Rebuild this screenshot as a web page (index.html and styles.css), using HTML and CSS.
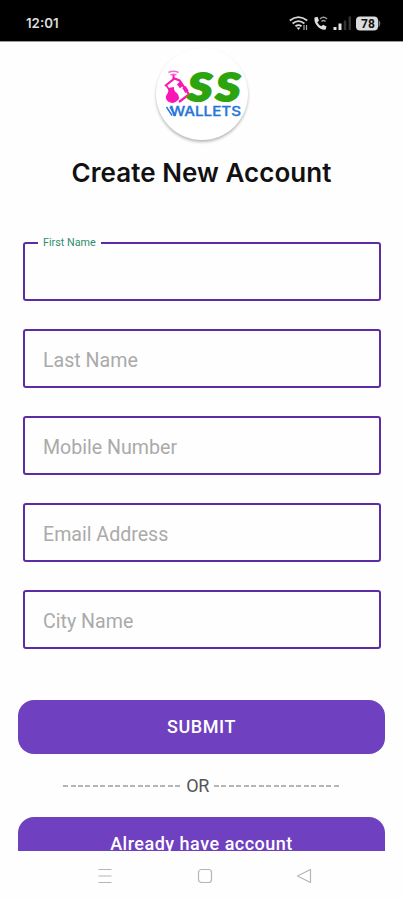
FILE: index.html
```html
<!DOCTYPE html>
<html lang="en">
<head>
<meta charset="utf-8">
<title>Create New Account</title>
<link rel="stylesheet" href="styles.css">
</head>
<body>
<header class="status">
  <span class="time">12:01</span>
  <svg class="indicators" width="96" height="20" viewBox="0 0 96 20">
    <g fill="none" stroke="#d8d8d8" stroke-width="1.8">
      <path d="M.8 7.500Q9.500.8 18.200 7.500M3.600 10.500Q9.500 5.800 15.400 10.500M6.500 13.300Q9.500 11 12.500 13.300"/>
    </g>
    <path d="M7.500 14.500h4l-2 2.500z" fill="#d8d8d8"/>
    <path d="M15 12v5M17.500 12v5" stroke="#aaa" stroke-width="1.200"/>
    <path d="M25.500 4.500l3-.8 1.500 4-1.700 1.500q1.300 2.700 4 4l1.800-1.500 3.400 1.800-.8 3q-4.700.8-8.200-3.200Q24.800 9.500 25.500 4.500z" fill="#e0e0e0"/>
    <path d="M31 6q3.500-3.500 7 0M32.500 8.500q2-2 4 0" fill="none" stroke="#999" stroke-width="1.500"/>
    <path d="M46 14v3M51 10.500V17" stroke="#e4e4e4" stroke-width="3"/>
    <path d="M56 7.500V17M60.800 3.500V17" stroke="#343434" stroke-width="2.500"/>
    <rect x="67" y="3.500" width="22" height="14" rx="4" fill="#dcdcdc"/>
    <path d="M89.500 6.500q3.500 4 0 8z" fill="#777"/>
    <text class="battery" x="79" y="15" text-anchor="middle">78</text>
  </svg>
</header>
<main class="page">
  <div class="logo">
    <svg width="92" height="92" viewBox="0 0 92 92">
      <g fill="none" stroke="#fa16b5">
        <path d="M12.500 24.500q5-2.500 10 0M14.500 27q3-1.500 6 0" stroke-width="1.400" stroke="#f36bd0"/>
        <path d="M17.500 27v4" stroke-width="2"/>
        <path d="M9 38l9.500-7.500 5 2 9.500 14-10 7.500" stroke-width="2.200"/>
        <path d="M10 37l4 6" stroke-width="1.500"/>
        <path d="M22.500 35l3 4M28 39l3 5" stroke-width="4"/>
      </g>
      <path d="M12 40l6-1q-.5 4 3 6 4 5 0 8-4 3.500-9 .5-4-4-.5-8 1.500-2 .5-5.500z" fill="#fa16b5"/>
      <text class="ss" x="32" y="52.500" textLength="24" lengthAdjust="spacingAndGlyphs">S</text>
      <text class="ss" x="60" y="52.500" textLength="24" lengthAdjust="spacingAndGlyphs">S</text>
      <path d="M10.500 59l5.500 8.500M14 59l5.500 8.500" stroke="#2676d9" stroke-width="1.400"/>
      <text class="wallets" x="14" y="68" textLength="71" lengthAdjust="spacingAndGlyphs">WALLETS</text>
    </svg>
  </div>
  <h1 class="title">Create New Account</h1>
  <form class="form">
    <div class="field"><span class="floating">First Name</span></div>
    <div class="field">Last Name</div>
    <div class="field">Mobile Number</div>
    <div class="field">Email Address</div>
    <div class="field">City Name</div>
  </form>
  <div class="button submit">SUBMIT</div>
  <div class="divider"><i class="dashes left"></i><span class="or">OR</span><i class="dashes right"></i></div>
  <div class="button account">Already have account</div>
</main>
<nav class="nav">
  <svg width="16" height="16" viewBox="0 0 16 16"><path d="M1.500 1.500h13M1.500 8h13M1.500 14.500h13"/></svg>
  <svg width="16" height="16" viewBox="0 0 16 16"><rect x="1.500" y="1.500" width="13" height="13" rx="3"/></svg>
  <svg width="16" height="16" viewBox="0 0 16 16"><path d="M14.500 1.500v13L1.500 8z" stroke-linejoin="round"/></svg>
</nav>
</body>
</html>
```
FILE: styles.css
```css
* { box-sizing: border-box; }
body {
  margin: 0;
  width: 403px;
  height: 900px;
  overflow: hidden;
  display: flex;
  flex-direction: column;
  background: #fefefe;
  font-family: Roboto, "Liberation Sans", sans-serif;
}
.status {
  height: 42px;
  flex: none;
  display: flex;
  justify-content: space-between;
  align-items: flex-start;
  padding: 13px 18px 0 26px;
  background: #000;
  border-bottom: 1px solid #999;
}
.time {
  color: #ddd;
  font: 600 13.300px/21px Inter, sans-serif;
}
.battery { font: 700 12px Roboto, sans-serif; fill: #111; }
.page {
  height: 809px;
  flex: none;
  overflow: hidden;
  padding: 6px 18px 0;
}
.logo {
  width: 92px;
  height: 92px;
  margin: 0 auto;
  border-radius: 50%;
  background: #fff;
  box-shadow: 0 2px 3px rgba(0, 0, 0, .28);
}
.logo svg { display: block; }
.ss { font: italic 900 37px Lato, sans-serif; fill: #2ca40e; stroke: #2ca40e; stroke-width: 2.2px; }
.wallets { font: 500 12.500px Inter, sans-serif; fill: #2676d9; stroke: #2676d9; stroke-width: .3px; }
.title {
  margin: 15px 0 0;
  text-align: center;
  font: 600 26px/36px Inter, sans-serif;
  letter-spacing: .05px;
  color: #111;
}
.form {
  display: flex;
  flex-direction: column;
  gap: 28px;
  margin: 51px 4px 0 5px;
}
.field {
  position: relative;
  height: 59px;
  border: 2px solid #5d2ca5;
  border-radius: 3px;
  padding: 2px 18px 0;
  font-size: 19.600px;
  line-height: 55px;
  color: #aaa;
}
.floating {
  position: absolute;
  left: 13px;
  top: -8px;
  padding: 0 5px;
  background: #fefefe;
  color: #2f8c6c;
  font-size: 10.800px;
  line-height: 14px;
}
.button {
  height: 54px;
  border-radius: 16px;
  background: #6f40bf;
  color: #fff;
  text-align: center;
  font-size: 18px;
  font-weight: 500;
  line-height: 53px;
  letter-spacing: .6px;
}
.submit { margin-top: 51px; }
.account { letter-spacing: .5px; }
.divider {
  height: 63px;
  display: flex;
  justify-content: center;
  align-items: center;
  gap: 5px;
}
.or { font-size: 18px; color: #555; letter-spacing: -.5px; }
.dashes {
  height: 2px;
  background: repeating-linear-gradient(90deg, #b5b5b5 0 5px, transparent 5px 7.500px);
}
.left { width: 118px; }
.right { width: 126px; }
.nav {
  height: 49px;
  flex: none;
  display: flex;
  justify-content: space-between;
  padding: 17px 91px 0 97px;
  background: #fefefe;
}
.nav svg { fill: none; stroke: #b5b5b5; stroke-width: 1.2px; }
```
